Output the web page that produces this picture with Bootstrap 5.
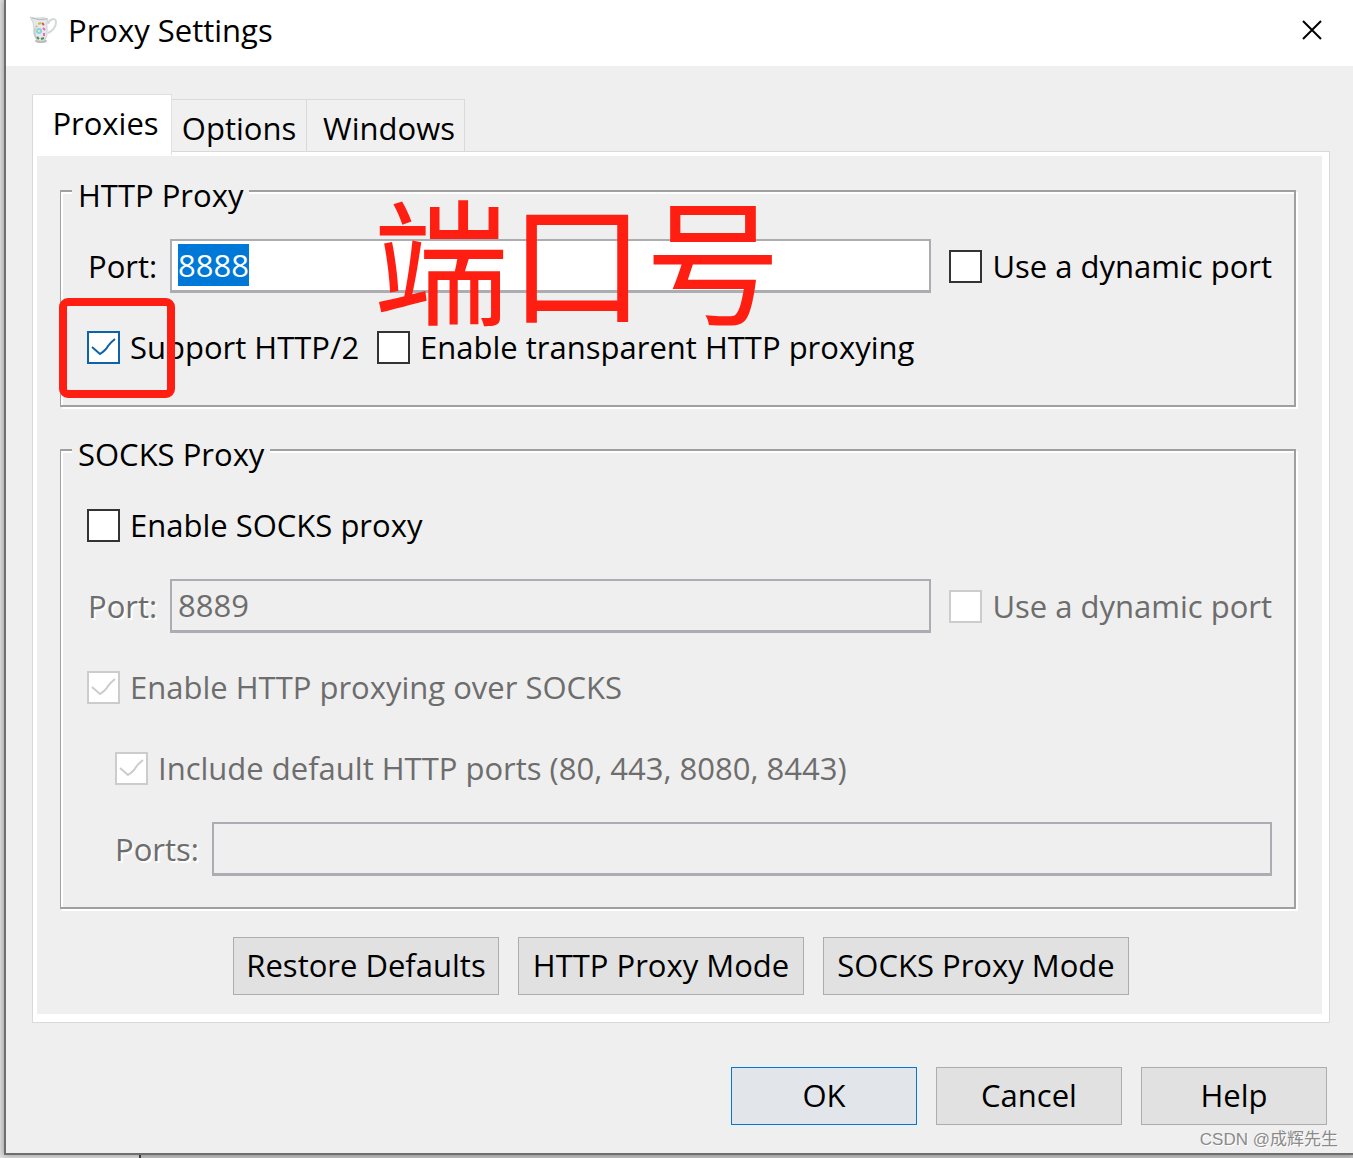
<!DOCTYPE html>
<html lang="en">
<head>
<meta charset="utf-8">
<meta name="viewport" content="width=device-width, initial-scale=1">
<title>Proxy Settings</title>
<link href="https://cdn.jsdelivr.net/npm/bootstrap@5.3.0/dist/css/bootstrap.min.css" rel="stylesheet">
<style>
  body { font-family: "Open Sans", "Noto Sans CJK SC", sans-serif; font-size: 31px; line-height: 40px; color: #000; background: #dcdcdc; }
  .dialog-window { margin-left: 4px; border-left: 2px solid #6e6e6e; border-bottom: 2px solid #6e6e6e; background: #efefef; box-shadow: 0 0 6px rgba(0,0,0,.35); }
  .title-bar { height: 66px; gap: 10px; padding: 0 30px 6px 24px; }
  .title-close { width: 22px; height: 22px; line-height: 0; }
  .dialog-body { padding: 28px 23px 0 26px; }
  .dialog-tabs { border: 0; }
  .dialog-tabs .nav-link { color: #000; border: 1px solid #d9d9d9; border-bottom: 0; border-left: 0; border-radius: 0; background: #f0f0f0; height: 52px; width: 158px; padding: 8px 0 0 7px; margin: 0; text-align: center; }
  .dialog-tabs .options-tab { width: 135px; padding-left: 0; }
  .dialog-tabs .nav-link.active { height: 61px; width: 140px; background: #fff; border-left: 1px solid #d9d9d9; position: relative; z-index: 1; margin-bottom: -4px; }
  .tab-frame { border: 1px solid #d9d9d9; background: #fff; padding: 4px 7px 8px 4px; }
  .tab-inner { background: #efefef; padding: 11px 26px 19px 23px; }
  .group-box { border: 2px solid #a0a0a0; border-left-width: 1px; padding: 24px 22px 31px 26px; box-shadow: 2px 2px 0 #fff, inset 2px 2px 0 #fff; }
  .group-box + .group-box { margin-top: 19px; }
  .group-box legend { font-size: inherit; line-height: 40px; margin: 0 0 0 -15px; padding: 8px 6px 0; background: #efefef; }
  .form-rows { gap: 27px; }
  .form-line { height: 54px; gap: 18px; }
  .sub-line { padding-left: 28px; }
  .text-box { font: inherit; color: #000; height: 54px; border: 2px solid #abadb3; border-bottom-width: 3px; border-radius: 0; padding: 0 5px 2px 6px; background: #fff; min-width: 0; }
  .text-box:focus { border-color: #abadb3; box-shadow: none; color: #000; background: #fff; }
  .text-box:disabled { background: #efefef; color: #6d6d6d; opacity: 1; }
  .text-box::selection { background: #0078d7; color: #fff; }
  .named-field { min-width: 0; }
  .field-name { flex: none; width: 83px; padding-left: 1px; }
  .field-name.wide-name { width: 97px; padding-left: 0; }
  .field-name.off { color: #6d6d6d; text-shadow: 2px 2px 0 #fff; }
  .form-check { gap: 10px; padding: 0; margin: 0; min-height: 0; }
  .dialog-window .form-check-input { width: 33px; height: 33px; margin: 0; float: none; flex: none; border: 2px solid #333; border-radius: 0; background-color: #fff; background-size: 100% 100%; box-shadow: none; }
  .dialog-window .form-check-input:checked { border-color: #0d63a9; background-color: #fff; background-image: url("data:image/svg+xml,%3Csvg xmlns='http://www.w3.org/2000/svg' viewBox='0 0 29 29'%3E%3Cpath d='M3 14l8 7q6-4 8-8 2-3 7-7' fill='none' stroke='%230d63a9' stroke-width='2'/%3E%3C/svg%3E"); }
  .dialog-window .form-check-input:disabled { border-color: #ccc; opacity: 1; }
  .dialog-window .form-check-input:disabled:checked { background-image: url("data:image/svg+xml,%3Csvg xmlns='http://www.w3.org/2000/svg' viewBox='0 0 29 29'%3E%3Cpath d='M3 14l8 7q6-4 8-8 2-3 7-7' fill='none' stroke='%23ccc' stroke-width='2'/%3E%3C/svg%3E"); }
  .dialog-window .form-check-input:disabled ~ .form-check-label { color: #6d6d6d; opacity: 1; }
  .push-btn { font-size: inherit; line-height: 40px; height: 58px; padding: 0 0 2px; border: 1px solid #adadad; border-radius: 0; background: #e1e1e1; color: #000; white-space: nowrap; }
  .push-btn:hover { background: #e5f1fb; border-color: #0078d7; color: #000; }
  .push-btn.default-btn { border-color: #0078d7; background: #e2e6eb; }
  .mode-buttons { gap: 19px; margin-top: 28px; padding-left: 6px; }
  .dialog-footer { gap: 19px; padding: 44px 3px 28px 0; }
  .dialog-footer .push-btn { width: 186px; }
  .width-m { width: 266px; } .width-l { width: 286px; } .width-xl { width: 306px; }
  .note-frame { position: absolute; left: -2px; top: 83px; width: 116px; height: 100px; border: 8px solid #ff1f12; border-radius: 9px; pointer-events: none; }
  .note-text { position: absolute; left: 312px; top: -34px; font-family: "Noto Sans CJK SC", sans-serif; font-size: 136px; line-height: 150px; color: #ff1f12; white-space: nowrap; pointer-events: none; }
  .watermark { position: absolute; right: 15px; bottom: 0; font-family: "Liberation Sans", "Noto Sans CJK SC", sans-serif; font-size: 17px; line-height: 26px; color: #8a8a8a; text-shadow: 1px 1px 0 #fff; }
  .backdrop-edge { height: 3px; background: #c4c4c4; }
  .backdrop-left { width: 141px; background: #dedede; border-right: 2px solid #444; }
</style>
<script src="https://cdn.jsdelivr.net/npm/bootstrap@5.3.0/dist/js/bootstrap.bundle.min.js"></script>
</head>
<body>
<main class="dialog-window position-relative">
  <header class="title-bar bg-white d-flex align-items-center">
    <svg width="28" height="28" viewBox="0 0 28 28" aria-hidden="true">
      <ellipse cx="11" cy="25" rx="6" ry="2" fill="#b9bbbb"/>
      <path d="M18 8c1-5 8-7 8-2 0 5-4 9-8 11" fill="none" stroke="#d5d8d8" stroke-width="2"/>
      <path d="M0 1q5 2 9 1t9 1q-2 4-1 9 1 8-2 12-4 2-8 0-4-5-3-12Q4 6 0 1z" fill="#e6e9e9" stroke="#ccd1d1"/>
      <path d="M2 2q7 3 15 1" fill="none" stroke="#b4baba"/>
      <path d="M5 12q-2 7 3 12" fill="none" stroke="#c6cccc" stroke-width="2"/>
      <circle cx="9" cy="15" r="3" fill="#86d3e4"/><circle cx="9" cy="15" r="1" fill="#f6f0b0"/>
      <path d="M8 8l3-1" stroke="#b9c65a" stroke-width="2"/>
      <path d="M12 7l2 2" stroke="#ee4b4b" stroke-width="2"/>
      <path d="M13 12l2 2m-1 3v3" stroke="#e86bb5" stroke-width="2"/>
      <path d="M7 21l2 2m2 0l3-1" stroke="#5a8b51" stroke-width="2"/>
      <path d="M6 11l1-1" stroke="#f0a540" stroke-width="2"/>
    </svg>
    <span>Proxy Settings</span>
    <button type="button" class="title-close btn p-0 border-0 ms-auto" aria-label="Close">
      <svg width="22" height="22" viewBox="0 0 22 22"><path d="M2 2l18 18M20 2L2 20" stroke="#000" stroke-width="2"/></svg>
    </button>
  </header>

  <div class="dialog-body">
    <nav class="nav nav-tabs dialog-tabs align-items-end flex-nowrap" aria-label="Settings pages">
      <a class="nav-link active" href="#proxies" aria-current="page">Proxies</a>
      <a class="nav-link options-tab" href="#options">Options</a>
      <a class="nav-link" href="#windows">Windows</a>
    </nav>
    <section class="tab-frame" id="proxies">
      <form class="tab-inner">
        <fieldset class="group-box position-relative">
          <legend class="float-none w-auto">HTTP Proxy</legend>
          <div class="form-rows d-flex flex-column">
            <div class="form-line d-flex align-items-center">
              <div class="named-field d-flex align-items-center flex-fill">
                <label class="field-name" for="httpPort">Port:</label>
                <input class="form-control text-box flex-fill w-auto" id="httpPort" type="text" value="8888">
              </div>
              <div class="form-check d-flex align-items-center flex-shrink-0">
                <input class="form-check-input" type="checkbox" id="httpDynamic">
                <label class="form-check-label" for="httpDynamic">Use a dynamic port</label>
              </div>
            </div>
            <div class="form-line d-flex align-items-center">
              <div class="form-check d-flex align-items-center">
                <input class="form-check-input" type="checkbox" id="http2" checked>
                <label class="form-check-label" for="http2">Support HTTP/2</label>
              </div>
              <div class="form-check d-flex align-items-center">
                <input class="form-check-input" type="checkbox" id="transparent">
                <label class="form-check-label" for="transparent">Enable transparent HTTP proxying</label>
              </div>
            </div>
          </div>
          <div class="note-frame"></div>
          <div class="note-text" lang="zh">端口号</div>
        </fieldset>

        <fieldset class="group-box">
          <legend class="float-none w-auto">SOCKS Proxy</legend>
          <div class="form-rows d-flex flex-column">
            <div class="form-line d-flex align-items-center">
              <div class="form-check d-flex align-items-center">
                <input class="form-check-input" type="checkbox" id="socks">
                <label class="form-check-label" for="socks">Enable SOCKS proxy</label>
              </div>
            </div>
            <div class="form-line d-flex align-items-center">
              <div class="named-field d-flex align-items-center flex-fill">
                <label class="field-name off" for="socksPort">Port:</label>
                <input class="form-control text-box flex-fill w-auto" id="socksPort" type="text" value="8889" disabled>
              </div>
              <div class="form-check d-flex align-items-center flex-shrink-0">
                <input class="form-check-input" type="checkbox" id="socksDynamic" disabled>
                <label class="form-check-label" for="socksDynamic">Use a dynamic port</label>
              </div>
            </div>
            <div class="form-line d-flex align-items-center">
              <div class="form-check d-flex align-items-center">
                <input class="form-check-input" type="checkbox" id="overSocks" checked disabled>
                <label class="form-check-label" for="overSocks">Enable HTTP proxying over SOCKS</label>
              </div>
            </div>
            <div class="form-line sub-line d-flex align-items-center">
              <div class="form-check d-flex align-items-center">
                <input class="form-check-input" type="checkbox" id="defaultPorts" checked disabled>
                <label class="form-check-label" for="defaultPorts">Include default HTTP ports (80, 443, 8080, 8443)</label>
              </div>
            </div>
            <div class="form-line sub-line d-flex align-items-center">
              <div class="named-field d-flex align-items-center flex-fill">
                <label class="field-name wide-name off" for="ports">Ports:</label>
                <input class="form-control text-box flex-fill w-auto" id="ports" type="text" disabled>
              </div>
            </div>
          </div>
        </fieldset>

        <div class="mode-buttons d-flex justify-content-center">
          <button type="button" class="btn push-btn width-m">Restore Defaults</button>
          <button type="button" class="btn push-btn width-l">HTTP Proxy Mode</button>
          <button type="button" class="btn push-btn width-xl">SOCKS Proxy Mode</button>
        </div>
      </form>
    </section>
    <footer class="dialog-footer d-flex justify-content-end">
      <button type="button" class="btn push-btn default-btn">OK</button>
      <button type="button" class="btn push-btn">Cancel</button>
      <button type="button" class="btn push-btn">Help</button>
    </footer>
  </div>
  <div class="watermark">CSDN @成辉先生</div>
</main>
<div class="backdrop-edge"><div class="backdrop-left h-100"></div></div>
<script>
  const port = document.getElementById('httpPort');
  port.focus();
  port.select();
</script>
</body>
</html>
